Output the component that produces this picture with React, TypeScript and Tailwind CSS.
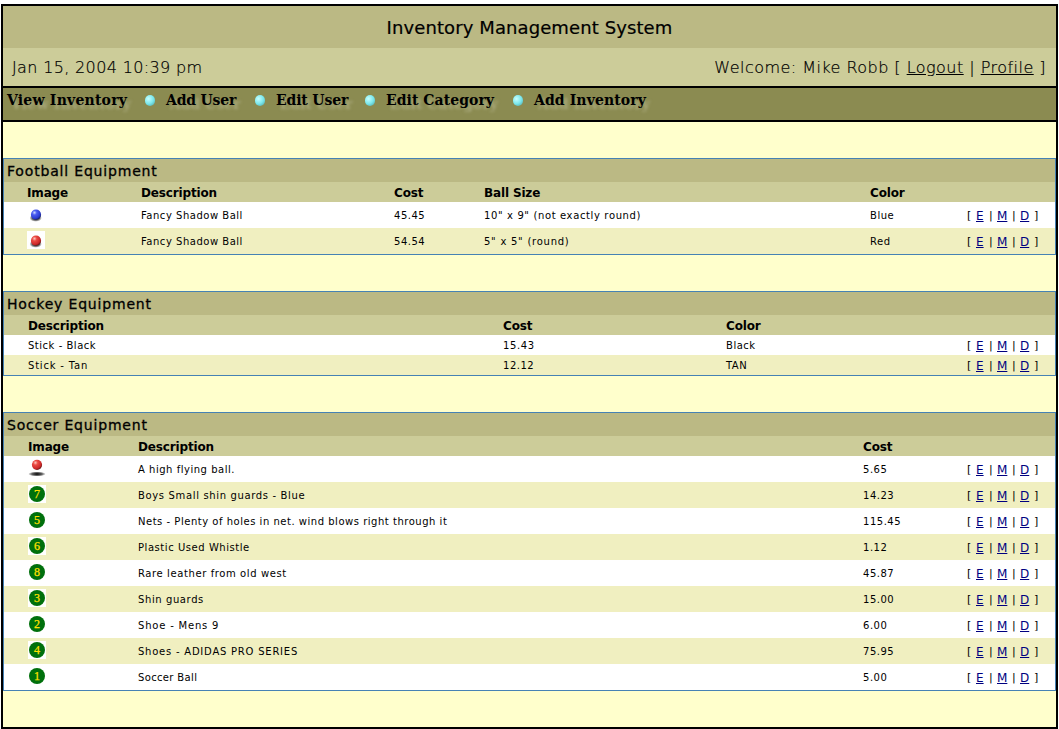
import React from "react";

type Cell = string | { text: string; tracking: string };
type Row = { icon?: string; cells: Cell[] };
type Column = { label: string; width: string };

const footballCols: Column[] = [
  { label: "Image", width: "w-[114px]" },
  { label: "Description", width: "w-[253px]" },
  { label: "Cost", width: "w-[90px]" },
  { label: "Ball Size", width: "w-[386px]" },
  { label: "Color", width: "w-[97px]" },
];
const footballRows: Row[] = [
  {
    icon: "blue",
    cells: [
      "Fancy Shadow Ball",
      "45.45",
      { text: '10" x 9" (not exactly round)', tracking: "tracking-[0.63px]" },
      "Blue",
    ],
  },
  {
    icon: "red",
    cells: ["Fancy Shadow Ball", "54.54", { text: '5" x 5" (round)', tracking: "tracking-[0.75px]" }, "Red"],
  },
];
const hockeyCols: Column[] = [
  { label: "Description", width: "w-[475px]" },
  { label: "Cost", width: "w-[223px]" },
  { label: "Color", width: "w-[241px]" },
];
const hockeyRows: Row[] = [
  { cells: ["Stick - Black", { text: "15.43", tracking: "tracking-[0.6px]" }, "Black"] },
  { cells: [{ text: "Stick - Tan", tracking: "tracking-[0.8px]" }, "12.12", "TAN"] },
];
const soccerCols: Column[] = [
  { label: "Image", width: "w-[110px]" },
  { label: "Description", width: "w-[725px]" },
  { label: "Cost", width: "w-[104px]" },
];
const soccerRows: Row[] = [
  { icon: "flying", cells: ["A high flying ball.", "5.65"] },
  { icon: "7", cells: [{ text: "Boys Small shin guards - Blue", tracking: "tracking-[0.65px]" }, "14.23"] },
  { icon: "5", cells: ["Nets - Plenty of holes in net. wind blows right through it", "115.45"] },
  { icon: "6", cells: [{ text: "Plastic Used Whistle", tracking: "tracking-[0.55px]" }, "1.12"] },
  { icon: "8", cells: [{ text: "Rare leather from old west", tracking: "tracking-[0.6px]" }, "45.87"] },
  { icon: "3", cells: [{ text: "Shin guards", tracking: "tracking-[0.6px]" }, "15.00"] },
  { icon: "2", cells: [{ text: "Shoe - Mens 9", tracking: "tracking-[0.8px]" }, "6.00"] },
  { icon: "4", cells: [{ text: "Shoes - ADIDAS PRO SERIES", tracking: "tracking-[0.77px]" }, "75.95"] },
  { icon: "1", cells: [{ text: "Soccer Ball", tracking: "tracking-[0.35px]" }, "5.00"] },
];

function Gradients() {
  return (
    <svg className="absolute h-0 w-0" aria-hidden="true">
      <defs>
        <radialGradient id="blueBall" cx="0.35" cy="0.3" r="0.75">
          <stop offset="0" stopColor="#d0dcff" />
          <stop offset="0.3" stopColor="#4a5cf0" />
          <stop offset="0.75" stopColor="#2a3ad0" />
          <stop offset="1" stopColor="#141c60" />
        </radialGradient>
        <radialGradient id="redBall" cx="0.35" cy="0.3" r="0.75">
          <stop offset="0" stopColor="#ffc8c0" />
          <stop offset="0.3" stopColor="#ea4a42" />
          <stop offset="0.75" stopColor="#cc2828" />
          <stop offset="1" stopColor="#601414" />
        </radialGradient>
        <radialGradient id="ballShadow">
          <stop offset="0" stopColor="#000" stopOpacity="1" />
          <stop offset="0.6" stopColor="#000" stopOpacity="0.6" />
          <stop offset="1" stopColor="#000" stopOpacity="0" />
        </radialGradient>
      </defs>
    </svg>
  );
}

function ItemIcon({ name }: { name: string }) {
  if (name === "blue" || name === "red") {
    return (
      <svg viewBox="0 0 18 18" className="h-[18px] w-[18px] bg-white">
        <ellipse cx="8.7" cy="13" rx="6.2" ry="3.8" fill="url(#ballShadow)" />
        <circle cx="9" cy="9.7" r="5.1" fill={name === "blue" ? "url(#blueBall)" : "url(#redBall)"} />
      </svg>
    );
  }
  if (name === "flying") {
    return (
      <svg viewBox="0 0 18 18" className="h-[18px] w-[18px] bg-white">
        <ellipse cx="9" cy="15" rx="8.8" ry="2.5" fill="url(#ballShadow)" />
        <circle cx="9" cy="5.8" r="5.1" fill="url(#redBall)" />
      </svg>
    );
  }
  return (
    <span className="flex h-[18px] w-[18px] items-center justify-center bg-white">
      <span className="flex h-4 w-4 items-center justify-center rounded-full bg-[#00700c] font-['Liberation_Serif',serif] text-[12px] leading-4 text-[#ffe000] [-webkit-text-stroke:0.25px_#ffe000]">
        {name}
      </span>
    </span>
  );
}

function Actions() {
  return (
    <div className="flex whitespace-pre pt-px text-[11px] leading-4 tracking-normal">
      <span className="w-[9px]">[</span>
      <a className="w-[13px] text-[12px] text-[#000080] underline underline-offset-1">E</a>
      <span className="w-[8px]">|</span>
      <a className="w-[15px] text-[12px] text-[#000080] underline underline-offset-1">M</a>
      <span className="w-[8px]">|</span>
      <a className="w-[14px] text-[12px] text-[#000080] underline underline-offset-1">D</a>
      <span>]</span>
    </div>
  );
}

function Section({
  title,
  cols,
  rows,
  pad,
}: {
  title: string;
  cols: Column[];
  rows: Row[];
  pad: string;
}) {
  const hasIcons = cols[0].label === "Image";
  return (
    <section className="border border-[#4682b4]">
      <h2 className="h-[23px] bg-[#bbb984] pl-[3px] text-[14px] leading-[24px] tracking-[0.82px] [-webkit-text-stroke:0.3px_#000]">
        {title}
      </h2>
      <div className={`flex h-5 bg-[#cccc99] ${pad} text-[12px] leading-[22px] font-bold tracking-[-0.15px]`}>
        {cols.map((c) => (
          <div key={c.label} className={`${c.width} shrink-0 whitespace-nowrap`}>
            {c.label}
          </div>
        ))}
      </div>
      {rows.map((row, i) => (
        <div
          key={i}
          className={`flex items-center ${hasIcons ? "h-[26px]" : "h-5"} ${i % 2 ? "bg-[#f0efc0]" : "bg-white"} ${pad} text-[10px] leading-4`}
        >
          {row.icon && (
            <div className={`${cols[0].width} shrink-0 pb-[2px]`}>
              <ItemIcon name={row.icon} />
            </div>
          )}
          {row.cells.map((cell, j) => {
            const text = typeof cell === "string" ? cell : cell.text;
            const tracking = typeof cell === "string" ? "tracking-[0.52px]" : cell.tracking;
            return (
              <div
                key={j}
                className={`${cols[hasIcons ? j + 1 : j].width} ${tracking} shrink-0 pt-[2px] whitespace-nowrap`}
              >
                {text}
              </div>
            );
          })}
          <Actions />
        </div>
      ))}
    </section>
  );
}

const navItems = [
  { label: "View Inventory", width: "w-[138px]", tracking: "tracking-[0.22px]" },
  { label: "Add User", width: "w-[89px]", tracking: "tracking-[-0.2px]" },
  { label: "Edit User", width: "w-[89px]", tracking: "tracking-[-0.15px]" },
  { label: "Edit Category", width: "w-[127px]", tracking: "tracking-[0.05px]" },
  { label: "Add Inventory", width: "w-[130px]", tracking: "tracking-[0.1px]" },
];

export default function App() {
  return (
    <div className="h-[729px] w-[1059px] overflow-hidden bg-white pt-1 pl-px font-['DejaVu_Sans',sans-serif] text-black">
      <Gradients />
      <div className="h-[725px] w-[1057px] border-2 border-black bg-[#ffffcc]">
        <h1 className="h-[42px] bg-[#bbb984] text-center text-[18px] leading-[43px] tracking-[0.1px] [-webkit-text-stroke:0.2px_#000]">
          Inventory Management System
        </h1>
        <div className="flex h-[38px] justify-between bg-[#cccc99] pr-[10px] pl-[9px] text-[16px] leading-[39px] font-extralight [-webkit-text-stroke:0.2px_#000]">
          <span className="tracking-[0.35px]">Jan 15, 2004 10:39 pm</span>
          <span className="tracking-[0.47px]">
            Welcome: Mike Robb [ <a className="underline underline-offset-1">Logout</a> |{" "}
            <a className="underline underline-offset-1">Profile</a> ]
          </span>
        </div>
        <nav className="flex h-9 border-y-2 border-black bg-[#8b8b51] pl-1">
          {navItems.map((item, i) => (
            <div key={item.label} className="flex">
              {i > 0 && (
                <span className="mt-[7px] mr-[11px] h-[10.5px] w-[10px] rounded-full bg-[radial-gradient(circle_at_35%_35%,#c8ffff_0%,#7ce8ec_50%,#4a9c9c_100%)]" />
              )}
              <a
                className={`${item.width} ${item.tracking} whitespace-nowrap font-['DejaVu_Serif',serif] text-[14px] leading-6 font-bold [text-shadow:4px_4px_3px_#a9a97c]`}
              >
                {item.label}
              </a>
            </div>
          ))}
        </nav>
        <main className="flex flex-col gap-9 pt-9">
          <Section title="Football Equipment" cols={footballCols} rows={footballRows} pad="pl-[23px]" />
          <Section title="Hockey Equipment" cols={hockeyCols} rows={hockeyRows} pad="pl-[24px]" />
          <Section title="Soccer Equipment" cols={soccerCols} rows={soccerRows} pad="pl-[24px]" />
        </main>
      </div>
    </div>
  );
}
